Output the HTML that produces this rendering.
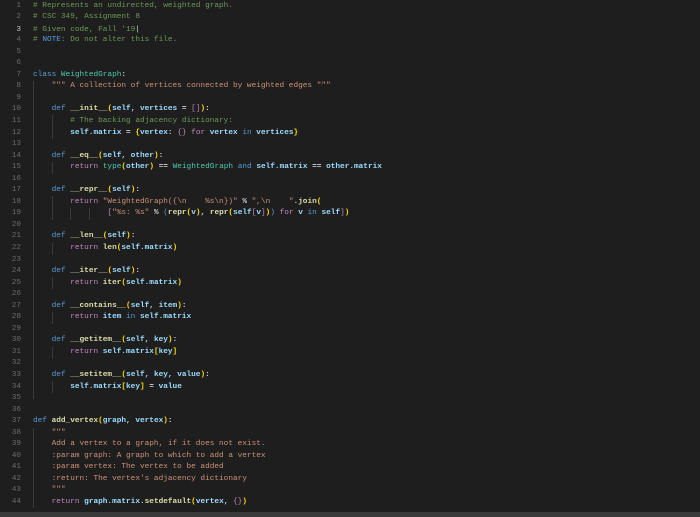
<!DOCTYPE html>
<html><head><style>
body{margin:0;width:700px;height:517px;background:#1e1e1e;overflow:hidden;position:relative}
#c{position:absolute;top:0.5px;left:0;font-family:"Liberation Mono",monospace;font-size:7.75px;font-weight:bold;color:#9cdcfe}
.l{height:11.56px;line-height:11.56px;white-space:pre;position:relative}
.n{position:absolute;left:0;width:21px;text-align:right;color:#6a6a6a;font-weight:normal}
.t{position:absolute;left:33px}
.cm{color:#6a9955;font-weight:normal}.k{color:#569cd6;font-weight:normal}.f{color:#dcdcaa}
.s{color:#ce9178;font-weight:normal}.p{color:#c586c0;font-weight:normal}.y{color:#ffd700}.cl{color:#4ec9b0;font-weight:normal}
.w{color:#d4d4d4}
.cur{border-top:1px solid #303030;border-bottom:1px solid #303030;box-sizing:border-box}
.g{position:absolute;width:1px;background:#3a3a3a}
</style></head><body>
<div class="g" style="left:33px;top:81px;height:318px"></div>
<div class="g" style="left:52px;top:115px;height:24px"></div>
<div class="g" style="left:52px;top:162px;height:12px"></div>
<div class="g" style="left:52px;top:196px;height:24px"></div>
<div class="g" style="left:70px;top:208px;height:12px"></div>
<div class="g" style="left:89px;top:208px;height:12px"></div>
<div class="g" style="left:52px;top:243px;height:12px"></div>
<div class="g" style="left:52px;top:277px;height:12px"></div>
<div class="g" style="left:52px;top:312px;height:12px"></div>
<div class="g" style="left:52px;top:347px;height:12px"></div>
<div class="g" style="left:52px;top:381px;height:12px"></div>
<div class="g" style="left:33px;top:428px;height:80px"></div>
<div id="c">
<div class="l"><span class="n">1</span><span class="t cm"># Represents an undirected, weighted graph.</span></div>
<div class="l"><span class="n">2</span><span class="t cm"># CSC 349, Assignment 8</span></div>
<div class="l cur"><span class="n" style="color:#c6c6c6">3</span><span class="t cm"># Given code, Fall '19<span style="color:#ddd">|</span></span></div>
<div class="l"><span class="n">4</span><span class="t cm"># <span class="k">NOTE</span>: Do not alter this file.</span></div>
<div class="l"><span class="n">5</span></div>
<div class="l"><span class="n">6</span></div>
<div class="l"><span class="n">7</span><span class="t"><span class="k">class</span> <span class="cl">WeightedGraph</span><span class="w">:</span></span></div>
<div class="l"><span class="n">8</span><span class="t s">    """ A collection of vertices connected by weighted edges """</span></div>
<div class="l"><span class="n">9</span></div>
<div class="l"><span class="n">10</span><span class="t">    <span class="k">def</span> <span class="f">__init__</span><span class="y">(</span>self, vertices <span class="w">=</span> <span class="p">[]</span><span class="y">)</span><span class="w">:</span></span></div>
<div class="l"><span class="n">11</span><span class="t cm">        # The backing adjacency dictionary:</span></div>
<div class="l"><span class="n">12</span><span class="t">        self.matrix <span class="w">=</span> <span class="y">{</span>vertex: <span class="p">{}</span> <span class="p">for</span> vertex <span class="k">in</span> vertices<span class="y">}</span></span></div>
<div class="l"><span class="n">13</span></div>
<div class="l"><span class="n">14</span><span class="t">    <span class="k">def</span> <span class="f">__eq__</span><span class="y">(</span>self, other<span class="y">)</span><span class="w">:</span></span></div>
<div class="l"><span class="n">15</span><span class="t">        <span class="p">return</span> <span class="cl">type</span><span class="y">(</span>other<span class="y">)</span> <span class="w">==</span> <span class="cl">WeightedGraph</span> <span class="k">and</span> self.matrix <span class="w">==</span> other.matrix</span></div>
<div class="l"><span class="n">16</span></div>
<div class="l"><span class="n">17</span><span class="t">    <span class="k">def</span> <span class="f">__repr__</span><span class="y">(</span>self<span class="y">)</span><span class="w">:</span></span></div>
<div class="l"><span class="n">18</span><span class="t">        <span class="p">return</span> <span class="s">"WeightedGraph({\n    %s\n})"</span> <span class="w">%</span> <span class="s">",\n    "</span>.<span class="f">join</span><span class="y">(</span></span></div>
<div class="l"><span class="n">19</span><span class="t">                <span class="p">[</span><span class="s">"%s: %s"</span> <span class="w">%</span> <span class="k">(</span><span class="f">repr</span><span class="y">(</span>v<span class="y">)</span>, <span class="f">repr</span><span class="y">(</span>self<span class="p">[</span>v<span class="p">]</span><span class="y">)</span><span class="k">)</span> <span class="p">for</span> v <span class="k">in</span> self<span class="p">]</span><span class="y">)</span></span></div>
<div class="l"><span class="n">20</span></div>
<div class="l"><span class="n">21</span><span class="t">    <span class="k">def</span> <span class="f">__len__</span><span class="y">(</span>self<span class="y">)</span><span class="w">:</span></span></div>
<div class="l"><span class="n">22</span><span class="t">        <span class="p">return</span> <span class="f">len</span><span class="y">(</span>self.matrix<span class="y">)</span></span></div>
<div class="l"><span class="n">23</span></div>
<div class="l"><span class="n">24</span><span class="t">    <span class="k">def</span> <span class="f">__iter__</span><span class="y">(</span>self<span class="y">)</span><span class="w">:</span></span></div>
<div class="l"><span class="n">25</span><span class="t">        <span class="p">return</span> <span class="f">iter</span><span class="y">(</span>self.matrix<span class="y">)</span></span></div>
<div class="l"><span class="n">26</span></div>
<div class="l"><span class="n">27</span><span class="t">    <span class="k">def</span> <span class="f">__contains__</span><span class="y">(</span>self, item<span class="y">)</span><span class="w">:</span></span></div>
<div class="l"><span class="n">28</span><span class="t">        <span class="p">return</span> item <span class="k">in</span> self.matrix</span></div>
<div class="l"><span class="n">29</span></div>
<div class="l"><span class="n">30</span><span class="t">    <span class="k">def</span> <span class="f">__getitem__</span><span class="y">(</span>self, key<span class="y">)</span><span class="w">:</span></span></div>
<div class="l"><span class="n">31</span><span class="t">        <span class="p">return</span> self.matrix<span class="y">[</span>key<span class="y">]</span></span></div>
<div class="l"><span class="n">32</span></div>
<div class="l"><span class="n">33</span><span class="t">    <span class="k">def</span> <span class="f">__setitem__</span><span class="y">(</span>self, key, value<span class="y">)</span><span class="w">:</span></span></div>
<div class="l"><span class="n">34</span><span class="t">        self.matrix<span class="y">[</span>key<span class="y">]</span> <span class="w">=</span> value</span></div>
<div class="l"><span class="n">35</span></div>
<div class="l"><span class="n">36</span></div>
<div class="l"><span class="n">37</span><span class="t"><span class="k">def</span> <span class="f">add_vertex</span><span class="y">(</span>graph, vertex<span class="y">)</span><span class="w">:</span></span></div>
<div class="l"><span class="n">38</span><span class="t s">    """</span></div>
<div class="l"><span class="n">39</span><span class="t s">    Add a vertex to a graph, if it does not exist.</span></div>
<div class="l"><span class="n">40</span><span class="t s">    :param graph: A graph to which to add a vertex</span></div>
<div class="l"><span class="n">41</span><span class="t s">    :param vertex: The vertex to be added</span></div>
<div class="l"><span class="n">42</span><span class="t s">    :return: The vertex's adjacency dictionary</span></div>
<div class="l"><span class="n">43</span><span class="t s">    """</span></div>
<div class="l"><span class="n">44</span><span class="t">    <span class="p">return</span> graph.matrix.<span class="f">setdefault</span><span class="y">(</span>vertex, <span class="p">{}</span><span class="y">)</span></span></div>
</div>
<div style="position:absolute;left:0;top:512px;width:700px;height:5px;background:#3a3a3a"></div>
</body></html>
